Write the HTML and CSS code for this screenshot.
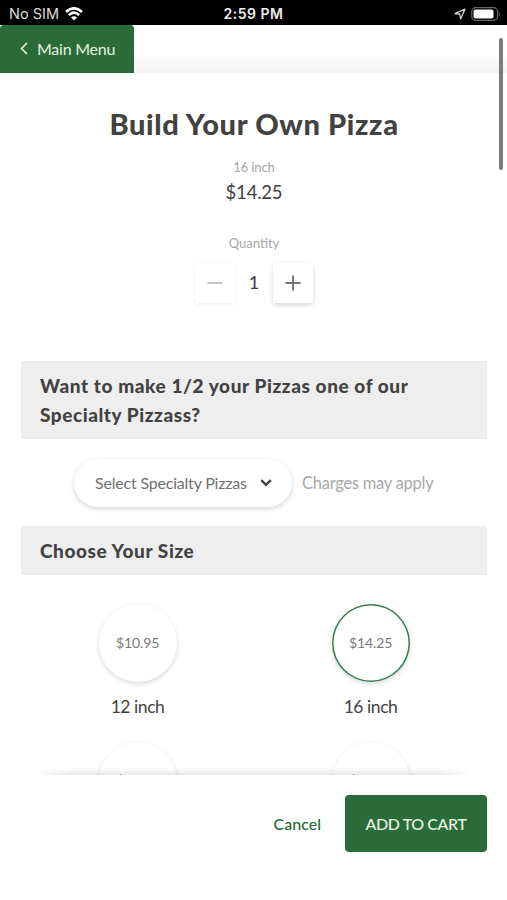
FILE: index.html
```html
<!DOCTYPE html>
<html lang="en">
<head>
<meta charset="utf-8">
<meta name="viewport" content="width=device-width">
<title>Build Your Own Pizza</title>
<link rel="stylesheet" href="styles.css">
</head>
<body>
<div class="status">
  <div class="carrier"><span class="sim">No SIM</span>
    <svg width="18" height="14" viewBox="0 0 18 14" fill="none" stroke="#fff" stroke-width="2.5"><path d="M1 5Q9-2.2 17 5M3.8 8Q9 3.2 14.2 8"/><path d="M9 13.5 6 10.4Q9 8 12 10.4Z" fill="#fff" stroke="none"/></svg>
  </div>
  <span class="time">2:59 PM</span>
  <div class="power">
    <svg width="12" height="12" viewBox="0 0 12 12" fill="none" stroke="#ddd" stroke-width="1.2" stroke-linejoin="round"><path d="M11 1 1 5.6 5.8 6.2 6.7 11Z"/></svg>
    <svg width="30" height="14" viewBox="0 0 30 14"><rect x=".7" y=".7" width="25.8" height="12.6" rx="3.8" fill="none" stroke="#666" stroke-width="1.2"/><rect x="2.5" y="2.4" width="20" height="9.2" rx="2" fill="#fff"/><path d="M27.8 4.8Q29.8 7 27.8 9.2Z" fill="#666"/></svg>
  </div>
</div>
<nav class="nav">
  <a class="back"><svg width="8" height="13" viewBox="0 0 8 13" fill="none" stroke="#e2f3df" stroke-width="1.7"><path d="M7 1 1.5 6.5 7 12"/></svg><span>Main Menu</span></a>
</nav>
<div class="scrollbar"></div>
<main class="content">
  <h1>Build Your Own Pizza</h1>
  <div class="size">16 inch</div>
  <div class="price">$14.25</div>
  <div class="label">Quantity</div>
  <div class="stepper">
    <button class="step off"><svg width="16" height="16" viewBox="0 0 16 16" stroke="#b5b5b5" stroke-width="1.6"><path d="M.5 8h15"/></svg></button>
    <span class="count">1</span>
    <button class="step"><svg width="16" height="16" viewBox="0 0 16 16" stroke="#757575" stroke-width="1.9"><path d="M.5 8h15M8 .5v15"/></svg></button>
  </div>
  <h2 class="half"><span class="line1">Want to make 1/2 your Pizzas one of our</span><br><span class="line2">Specialty Pizzass?</span></h2>
  <div class="choice">
    <button class="select"><span>Select Specialty Pizzas</span><svg width="12" height="8" viewBox="0 0 12 8" fill="none" stroke="#444" stroke-width="2.4"><path d="M1.2 1.2 6 5.8 10.8 1.2"/></svg></button>
    <span class="note">Charges may apply</span>
  </div>
  <h2 class="choose"><span>Choose Your Size</span></h2>
  <div class="sizes">
    <div class="option"><div class="disc"><span>$10.95</span></div><div class="name">12 inch</div></div>
    <div class="option"><div class="disc picked"><span>$14.25</span></div><div class="name">16 inch</div></div>
    <div class="option"><div class="disc next"><span>$</span></div></div>
    <div class="option"><div class="disc next"><span>$</span></div></div>
  </div>
  <div class="fade"></div>
</main>
<footer class="footer">
  <a class="cancel">Cancel</a>
  <button class="add"><span>ADD TO CART</span></button>
</footer>
</body>
</html>
```

FILE: styles.css
```css
* { box-sizing: border-box; }
body { margin: 0; width: 507px; height: 900px; overflow: hidden; display: flex; flex-direction: column; background: #fff; color: #424242; font-family: Lato, "Liberation Sans", sans-serif; }
button { border: 0; padding: 0; background: #fff; font: inherit; color: inherit; }
svg { display: block; flex: none; }
.status { flex: none; height: 25px; background: #000; color: #fff; display: grid; grid-template-columns: 1fr auto 1fr; align-items: center; padding: 2px 6px 0 9px; font: 14.5px/20px Inter, sans-serif; }
.carrier { display: flex; align-items: center; gap: 6px; color: #ddd; }
.time { font-weight: 600; font-size: 14px; letter-spacing: .5px; color: #eee; margin-right: 3px; }
.power { display: flex; align-items: center; justify-content: flex-end; gap: 5px; }
.nav { flex: none; height: 48px; display: flex; background: linear-gradient(#fff 60%, #f2f2f2); }
.back { width: 134px; height: 48px; padding: 0 0 2px 20px; display: flex; align-items: center; gap: 9px; border-radius: 4px 4px 0 0; background: #2b6a39; color: #e2f3df; font-size: 16px; letter-spacing: -.25px; white-space: nowrap; }
.scrollbar { position: absolute; left: 499px; top: 38px; width: 4px; height: 132px; border-radius: 2px; background: #7c7c7c; }
.content { flex: none; position: relative; height: 702px; overflow: hidden; padding: 0 20px 0 21px; }
h1, h2 { margin: 0; }
h1 { margin-top: 31px; text-align: center; font-size: 29px; line-height: 40px; font-weight: 900; letter-spacing: .64px; white-space: nowrap; }
.size, .label { text-align: center; font-size: 13px; line-height: 20px; color: #a5a5a5; }
.size { margin-top: 13px; letter-spacing: -.1px; }
.price { margin-top: 3px; text-align: center; font-size: 18.5px; line-height: 24px; letter-spacing: -.2px; }
.label { margin-top: 29px; }
.stepper { margin-top: 10px; display: flex; justify-content: center; align-items: center; }
.step { width: 40px; height: 40px; display: flex; align-items: center; justify-content: center; border-radius: 2px; box-shadow: 0 2px 5px rgba(0,0,0,.17); }
.step.off { box-shadow: 0 1px 4px rgba(0,0,0,.07); }
.count { width: 38px; padding-bottom: 3px; text-align: center; font-size: 18px; font-weight: 500; }
h2 { padding: 10px 19px; background: #eee; font-size: 19px; line-height: 29px; font-weight: 900; letter-spacing: .58px; white-space: nowrap; }
.line2 { letter-spacing: .55px; }
.half { margin-top: 58px; height: 78px; }
.choice { margin-top: 20px; padding-left: 53px; display: flex; align-items: center; }
.select { width: 218px; height: 48px; border-radius: 24px; padding: 0 0 2px 21px; display: flex; align-items: center; gap: 13px; box-shadow: 0 2px 5px rgba(0,0,0,.17); font-size: 16px; letter-spacing: -.2px; color: #707070; white-space: nowrap; }
.select svg { margin-top: 2px; }
.note { margin-left: 10px; color: #a8a8a8; font-size: 16.5px; letter-spacing: -.25px; white-space: nowrap; }
.choose { margin-top: 19px; height: 49px; }
.sizes { margin-top: 29px; display: grid; grid-template-columns: 1fr 1fr; row-gap: 23px; }
.option { display: flex; flex-direction: column; align-items: center; }
.disc { width: 78px; height: 78px; padding-bottom: 1px; border-radius: 50%; display: flex; align-items: center; justify-content: center; box-shadow: 0 2px 5px rgba(0,0,0,.15); font-size: 14px; letter-spacing: -.1px; color: #7c7c7c; }
.disc span { width: 43px; white-space: nowrap; }
.next { padding-bottom: 3px; }
.picked { box-shadow: inset 0 0 0 1.5px #3a7d50, 0 2px 5px rgba(0,0,0,.15); }
.name { margin-top: 13px; font-size: 17.5px; line-height: 24px; letter-spacing: -.45px; }
.fade { position: absolute; left: 36px; right: 36px; bottom: 0; height: 7px; background: linear-gradient(rgba(0,0,0,0), rgba(0,0,0,.09)); -webkit-mask-image: linear-gradient(90deg, transparent, #000 8%, #000 92%, transparent); mask-image: linear-gradient(90deg, transparent, #000 8%, #000 92%, transparent); }
.footer { flex: 1; display: flex; justify-content: flex-end; align-items: flex-start; padding: 20px 20px 0; }
.cancel { margin-right: 24px; line-height: 57px; font-size: 16px; color: #2b6a39; font-weight: 500; }
.add { width: 142px; height: 57px; border-radius: 4px; background: #2b6a39; color: #e7f5e3; font-size: 16px; font-weight: 500; letter-spacing: -.4px; white-space: nowrap; }
```
